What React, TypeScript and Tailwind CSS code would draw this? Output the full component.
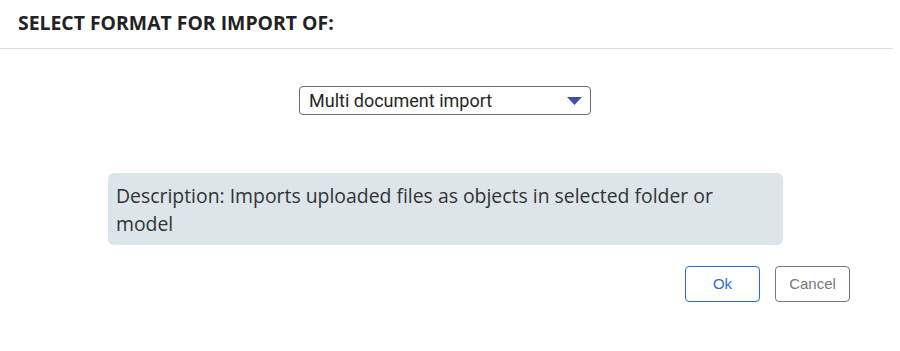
export default function App() {
  return (
    <div className="w-[900px] h-[351px] bg-white flex flex-col">
      {/* Header */}
      <div className="w-[893px] h-[49px] border-b border-[#dcdcdc] pl-[18px] pt-[8px]">
        <h1 className="font-['Open_Sans',sans-serif] font-bold text-[19.4px] leading-normal text-[#222]">
          SELECT FORMAT FOR IMPORT OF:
        </h1>
      </div>

      {/* Format select */}
      <div className="pl-[299px] pt-[37px]">
        <div className="w-[292px] h-[29px] border border-[#6b6b6b] rounded-[4px] flex items-center justify-between pl-[9px] pr-[8px]">
          <span className="font-['Roboto',sans-serif] text-[18px] text-[#262626]">Multi document import</span>
          <svg width="15" height="8" viewBox="0 0 15 8">
            <polygon points="0,0 15,0 7.5,8" fill="#3e4fb4" />
          </svg>
        </div>
      </div>

      {/* Description */}
      <div className="pl-[108px] pt-[58px]">
        <div className="w-[675px] h-[72px] bg-[#dce6ea] rounded-[6px] pl-[8px] pr-[16px] pt-[9px]">
          <p className="font-['Open_Sans',sans-serif] text-[19.4px] leading-[28px] text-[#333]">
            Description: Imports uploaded files as objects in selected folder or model
          </p>
        </div>
      </div>

      {/* Actions */}
      <div className="flex justify-end gap-[15px] pr-[50px] pt-[21px]">
        <button className="w-[75px] h-[36px] border border-[#2f6bd3] rounded-[4px] text-[#2f6bd3] font-['Liberation_Sans',sans-serif] text-[15px]">
          Ok
        </button>
        <button className="w-[75px] h-[36px] border border-[#777] rounded-[4px] text-[#777] font-['Liberation_Sans',sans-serif] text-[15px]">
          Cancel
        </button>
      </div>
    </div>
  );
}
